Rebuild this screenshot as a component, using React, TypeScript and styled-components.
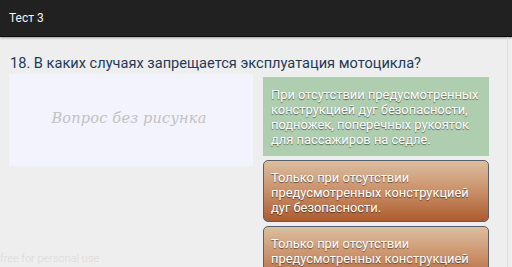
import React from 'react'
import styled, {createGlobalStyle} from "styled-components"

const GlobalStyle = createGlobalStyle`
  html, body {
    margin: 0;
    padding: 0;
    background: #eeeeee;
    font-family: Roboto, "Noto Sans", sans-serif;
  }
  #root {
    width: 512px;
    height: 267px;
    overflow: hidden;
  }
`

const Screen = styled.div`
  position: relative;
  width: 512px;
  height: 267px;
  overflow: hidden;
  background: #eeeeee;
`

const ActionBar = styled.header`
  height: 36px;
  display: flex;
  align-items: center;
  padding: 0 9px;
  background: #212121;
  color: #f4f4f4;
  font-size: 12px;
  border-bottom: 1px solid #0a0a0a;
  box-shadow: 0 1px 2px rgba(0, 0, 0, 0.35);
`

const Content = styled.main`
  display: flex;
  flex-direction: column;
  padding: 15px 23px 0 9px;
`

const Question = styled.h2`
  margin: 0 0 0 1px;
  font-size: 14.6px;
  font-weight: 400;
  line-height: 22px;
  color: #1e3a59;
`

const Columns = styled.div`
  display: grid;
  grid-template-columns: 244px 226px;
  column-gap: 10px;
  align-items: start;
`

const Picture = styled.div`
  height: 92px;
  display: grid;
  place-items: center;
  background: #f3f3fe;

  span {
    font-family: "DejaVu Serif", serif;
    font-style: italic;
    font-size: 14.5px;
    letter-spacing: 0.2px;
    color: #c2c2c2;
    padding-right: 4px;
    padding-bottom: 4px;
  }
`

const Answers = styled.div`
  display: flex;
  flex-direction: column;
  gap: 4px;
  margin-top: 3px;
`

const Answer = styled.div<{$correct?: boolean}>`
  box-sizing: border-box;
  padding: ${({$correct}) => $correct ? "10px 4px 9px 8px" : "9px 4px 6px 7px"};
  font-size: 12.9px;
  line-height: 15px;
  color: #ffffff;
  text-shadow: 0 1px 1px rgba(0, 0, 0, 0.5);
  background: ${({$correct}) => $correct
    ? "#afcdaf"
    : "linear-gradient(to bottom, #dcbea0 0%, #c99069 50%, #ad5b2e 100%)"};
  border: ${({$correct}) => $correct ? "none" : "1px solid #55606c"};
  border-radius: ${({$correct}) => $correct ? "0" : "5px"};
`

const Scroll = styled.div`
  position: absolute;
  top: 37px;
  bottom: 0;
  right: 4px;
  width: 1px;
  background: #dcdcdc;
`

const Watermark = styled.div`
  position: absolute;
  left: 0;
  bottom: 2px;
  font-size: 11px;
  font-weight: 300;
  color: #d9d9d9;
`

const App = () => {
  const answers = [
    {text: "При отсутствии предусмотренных конструкцией дуг безопасности, подножек, поперечных рукояток для пассажиров на седле.", correct: true},
    {text: "Только при отсутствии предусмотренных конструкцией дуг безопасности.", correct: false},
    {text: "Только при отсутствии предусмотренных конструкцией подножек.", correct: false},
  ]

  return (
    <Screen>
      <GlobalStyle/>
      <ActionBar>Тест 3</ActionBar>
      <Content>
        <Question>18. В каких случаях запрещается эксплуатация мотоцикла?</Question>
        <Columns>
          <Picture><span>Вопрос без рисунка</span></Picture>
          <Answers>
            {answers.map((a, i) => (
              <Answer key={i} $correct={a.correct}>{a.text}</Answer>
            ))}
          </Answers>
        </Columns>
      </Content>
      <Scroll/>
      <Watermark>free for personal use</Watermark>
    </Screen>
  )
}

export default App
